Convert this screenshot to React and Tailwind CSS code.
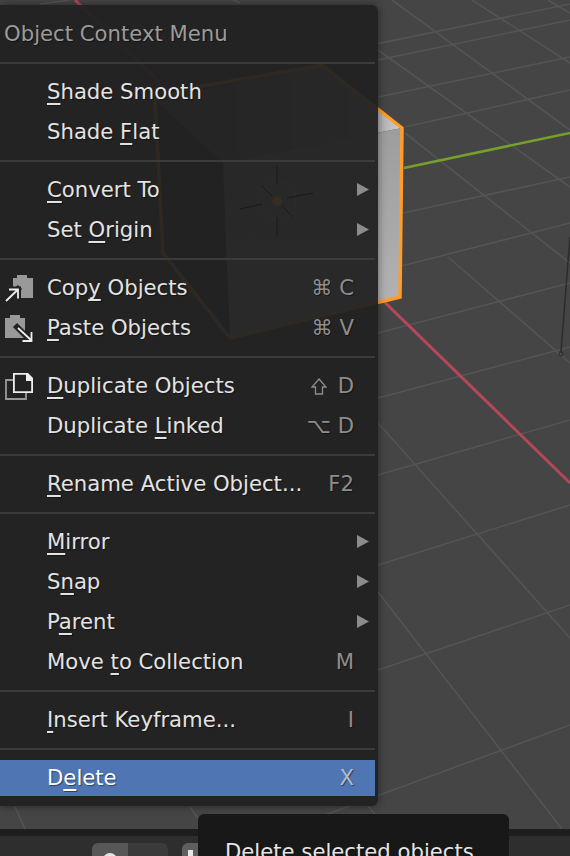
const gridLines = [
  [0, 122, 190, 82], [230, 74, 570, 4],
  [378, 60, 570, 20], [378, 97, 570, 57], [405, 127, 570, 90], [403, 213, 570, 177],
  [378, 272, 570, 223], [378, 333, 570, 283], [378, 398, 570, 347], [378, 475, 570, 420],
  [378, 565, 570, 505], [378, 670, 570, 605], [325, 815, 570, 725],
  [392, 0, 570, 130], [378, 50, 570, 187], [405, 133, 570, 263], [448, 257, 570, 363],
  [472, 0, 570, 63], [548, 0, 570, 13], [378, 423, 570, 638], [378, 592, 562, 829],
  [40, 4, 70, 0], [233, 0, 240, 3], [15, 807, 25, 829], [190, 807, 200, 821], [368, 806, 375, 814],
];

const Viewport = () => (
  <svg className="absolute inset-0 w-full h-full" viewBox="0 0 570 829">
    <defs>
      <linearGradient id="topFace" gradientUnits="userSpaceOnUse" x1="200" y1="0" x2="400" y2="0">
        <stop offset="0" stopColor="#6c6c6c" />
        <stop offset="0.85" stopColor="#a0a0a0" />
        <stop offset="1" stopColor="#cdcdcd" />
      </linearGradient>
      <linearGradient id="rightFace" x1="0" y1="0" x2="0" y2="1">
        <stop offset="0" stopColor="#9d9d9d" />
        <stop offset="1" stopColor="#b6b6b6" />
      </linearGradient>
    </defs>
    {gridLines.map(([x1, y1, x2, y2], i) => (
      <line key={i} x1={x1} y1={y1} x2={x2} y2={y2} stroke="#545454" strokeWidth="1.6" />
    ))}
    <line x1="75" y1="0" x2="570" y2="483" stroke="#b5475a" strokeWidth="3" />
    <line x1="404" y1="168" x2="570" y2="133" stroke="#76a02c" strokeWidth="2.5" />
    <line x1="150" y1="222" x2="190" y2="214" stroke="#76a02c" strokeWidth="2" opacity="0.5" />
    <line x1="570" y1="237" x2="561" y2="352" stroke="#2c2c2c" strokeWidth="1.5" />
    <circle cx="561" cy="354" r="2" fill="none" stroke="#2c2c2c" strokeWidth="1" />
    <polygon points="155,100 223,163 230,338 163,253" fill="#3c3c3c" />
    <polygon points="155,100 322,65 402,128 223,163" fill="url(#topFace)" />
    <polygon points="223,163 402,128 400,297 230,338" fill="url(#rightFace)" />
    <polygon
      points="155,100 197,87 322,65 402,128 400,297 230,338 163,253"
      fill="none"
      stroke="#ff9c2b"
      strokeWidth="3.5"
    />
  </svg>
);

// 3D cursor, seen through the menu
const CursorGhost = () => (
  <svg className="absolute left-[235px] top-[155px] pointer-events-none" width="82" height="80" viewBox="235 155 82 80">
    <circle cx="277" cy="196" r="19" fill="none" stroke="#352a2a" strokeWidth="1" strokeDasharray="6 4" />
    <circle cx="277" cy="196" r="5" fill="#352c24" />
    <g stroke="#1a1a1a" strokeWidth="1">
      <line x1="277" y1="161" x2="277" y2="180" />
      <line x1="277" y1="212" x2="277" y2="231" />
      <line x1="240" y1="204" x2="262" y2="199" />
      <line x1="287" y1="193" x2="313" y2="188" />
      <line x1="262" y1="181" x2="272" y2="191" />
      <line x1="282" y1="201" x2="293" y2="212" />
    </g>
  </svg>
);

const CopyIcon = () => (
  <svg width="47" height="40" viewBox="0 0 47 40">
    <path d="M13 11h4V8h10v3h6v20H19l-6-6z" fill="#999999" />
    <path d="M2 38 20 20" fill="none" stroke="#222222" strokeWidth="6" />
    <path d="M9 22h9.500v9.500" fill="none" stroke="#222222" strokeWidth="5" />
    <path d="M6 34 18 22.500M9 22.500h9v9" fill="none" stroke="#eeeeee" strokeWidth="1.8" />
  </svg>
);

const PasteIcon = () => (
  <svg width="47" height="40" viewBox="0 0 47 40">
    <path d="M5 11h5V8h10v3h5v20H5z" fill="#999999" />
    <path d="M15 18 34 37" fill="none" stroke="#222222" strokeWidth="6" />
    <path d="M32 25v9h-9" fill="none" stroke="#222222" strokeWidth="5" />
    <path d="M18 21 32 34M31.500 25v9h-9" fill="none" stroke="#eeeeee" strokeWidth="1.8" />
  </svg>
);

const DuplicateIcon = () => (
  <svg width="47" height="40" viewBox="0 0 47 40">
    <path d="M13 15H6v19h20v-6" fill="none" stroke="#999999" strokeWidth="1.8" />
    <path d="M13.900 8.900h13l5.200 5.200v13H13.900z" fill="#222222" stroke="#eeeeee" strokeWidth="1.8" />
    <path d="M26 8h2l5 5v3h-7z" fill="#eeeeee" />
  </svg>
);

const ShiftGlyph = () => (
  <svg className="inline-block align-[-2px] mr-[11px]" width="16" height="17" viewBox="0 0 16 17">
    <path d="M8 1 15 9h-3.500v7h-7V9H1z" fill="none" stroke="#8d8d8d" strokeWidth="1.300" />
  </svg>
);

const SubmenuArrow = () => (
  <svg className="ml-auto mr-[9px]" width="12" height="13" viewBox="0 0 12 13">
    <polygon points="0,0 12,6.5 0,13" fill="#8c8c8c" />
  </svg>
);

const U = ({ children }) => (
  <span className="underline decoration-[1.5px] underline-offset-[4px] [text-decoration-skip-ink:none]">{children}</span>
);

const Row = ({ icon, shortcut, submenu, children }) => (
  <div className="flex items-center h-10 pt-[1px] text-[#e3e3e3]">
    <div className="w-[47px] h-10 shrink-0 -mt-[1px]">{icon}</div>
    <span>{children}</span>
    {shortcut && (
      <span className="ml-auto pr-[24px] text-[#8d8d8d] whitespace-pre">{shortcut}</span>
    )}
    {submenu && <SubmenuArrow />}
  </div>
);

const Sep = () => (
  <div className="h-[18px] pt-[9px]">
    <div className="h-[2px] mr-[3px] bg-[#3b3b3b]" />
  </div>
);

export default function App() {
  return (
    <div className="relative flex flex-col w-[570px] h-[856px] overflow-hidden bg-[#2e2e2e] font-['DejaVu_Sans',sans-serif] text-[21.2px] leading-[26px] [text-shadow:1px_1px_1px_rgba(0,0,0,0.45)]">
      <div className="relative h-[829px] shrink-0 bg-[#454545]">
        <Viewport />
      </div>

      {/* bottom status strip and toolbar buttons */}
      <div className="flex items-start h-[27px] border-t-[7px] border-[#1e1e1e] pt-[7px] pl-[92px]">
        <div className="relative w-9 h-8 rounded-l-md bg-[#575757]">
          <div className="absolute left-[11px] top-[10px] w-[14px] h-[14px] rounded-full bg-[#e6e6e6]" />
        </div>
        <div className="w-10 h-8 rounded-r-md bg-[#3a3a3a]" />
        <div className="relative w-10 h-8 ml-[14px] rounded-l-md bg-[#5f5f5f]">
          <div className="absolute left-[6px] top-[7px] w-[5px] h-4 bg-[#e6e6e6]" />
        </div>
      </div>

      {/* context menu */}
      <div className="absolute left-0 top-[5px] w-[378px] pt-2 pb-[9px] rounded-r-md bg-[#212121]/[0.945] shadow-[0_0_8px_rgba(0,0,0,0.45)]">
        <CursorGhost />
        <div className="relative">
          <div className="flex items-center h-10 pl-1 pt-[1px] text-[#9b9b9b]">Object Context Menu</div>
          <Sep />
          <Row><U>S</U>hade Smooth</Row>
          <Row>Shade <U>F</U>lat</Row>
          <Sep />
          <Row submenu><U>C</U>onvert To</Row>
          <Row submenu>Set <U>O</U>rigin</Row>
          <Sep />
          <Row icon={<CopyIcon />} shortcut="⌘ C">Cop<U>y</U> Objects</Row>
          <Row icon={<PasteIcon />} shortcut="⌘ V"><U>P</U>aste Objects</Row>
          <Sep />
          <Row icon={<DuplicateIcon />} shortcut={<><ShiftGlyph />D</>}><U>D</U>uplicate Objects</Row>
          <Row shortcut="⌥ D">Duplicate <U>L</U>inked</Row>
          <Sep />
          <Row shortcut="F2"><U>R</U>ename Active Object...</Row>
          <Sep />
          <Row submenu><U>M</U>irror</Row>
          <Row submenu>S<U>n</U>ap</Row>
          <Row submenu>P<U>a</U>rent</Row>
          <Row shortcut="M">Move <U>t</U>o Collection</Row>
          <Sep />
          <Row shortcut="I"><U>I</U>nsert Keyframe...</Row>
          <Sep />
          <div className="mt-[3px] mb-[1px] mr-[3px] h-9 pb-[1px] flex items-center bg-[#4f76b2] text-white">
            <span className="pl-[47px]">D<U>e</U>lete</span>
            <span className="ml-auto pr-[21px] text-[#b4bccb]">X</span>
          </div>
        </div>
      </div>

      {/* tooltip */}
      <div className="absolute left-[198px] top-[814px] w-[311px] h-[60px] pt-[25px] pl-[27px] rounded-md bg-[#181818] text-[#e6e6e6] whitespace-nowrap">
        Delete selected objects
      </div>
    </div>
  );
}
